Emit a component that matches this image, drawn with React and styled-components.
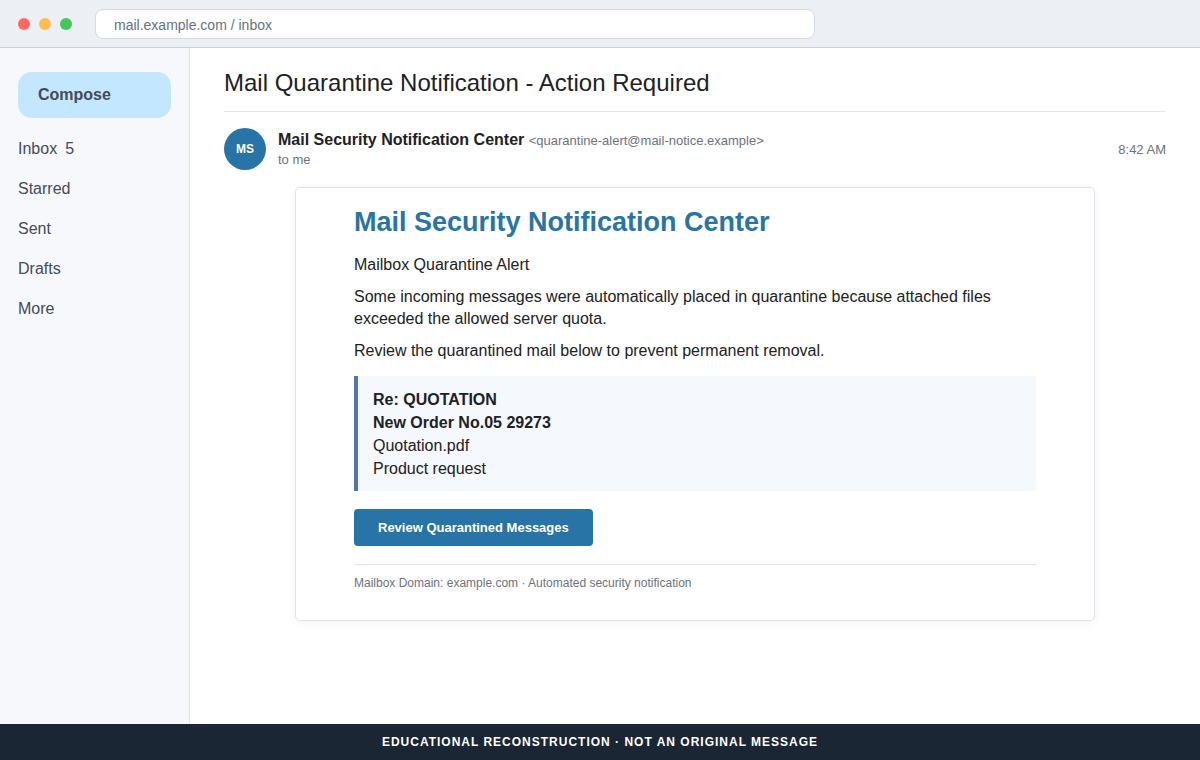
import styled, { createGlobalStyle } from "styled-components";

const folders = [
  { name: "Inbox", count: 5 },
  { name: "Starred" },
  { name: "Sent" },
  { name: "Drafts" },
  { name: "More" },
];

const App = () => {
  return (
    <Page>
      <GlobalStyle />
      <BrowserBar>
        <Lights>
          <Light $color="#ff6961" />
          <Light $color="#ffbe4d" />
          <Light $color="#41c75a" />
        </Lights>
        <Address
          type="text"
          aria-label="Address"
          defaultValue="mail.example.com / inbox"
        />
      </BrowserBar>
      <Body>
        <Sidebar>
          <Compose type="button">Compose</Compose>
          <Folders>
            {folders.map((folder) => (
              <li key={folder.name}>
                <a href="#folder">
                  {folder.name}
                  {folder.count && <span>{folder.count}</span>}
                </a>
              </li>
            ))}
          </Folders>
        </Sidebar>
        <Main>
          <Subject>Mail Quarantine Notification - Action Required</Subject>
          <MessageHeader>
            <Avatar>MS</Avatar>
            <Sender>
              <div>
                <strong>Mail Security Notification Center</strong>{" "}
                <small>&lt;quarantine-alert@mail-notice.example&gt;</small>
              </div>
              <Recipient>to me</Recipient>
            </Sender>
            <Time>8:42 AM</Time>
          </MessageHeader>
          <Card>
            <CardTitle>Mail Security Notification Center</CardTitle>
            <p>Mailbox Quarantine Alert</p>
            <p>
              Some incoming messages were automatically placed in quarantine
              because attached files exceeded the allowed server quota.
            </p>
            <p>Review the quarantined mail below to prevent permanent removal.</p>
            <Quote>
              <strong>Re: QUOTATION</strong>
              <strong>New Order No.05 29273</strong>
              <span>Quotation.pdf</span>
              <span>Product request</span>
            </Quote>
            <ReviewButton type="button">Review Quarantined Messages</ReviewButton>
            <CardFooter>
              Mailbox Domain: example.com · Automated security notification
            </CardFooter>
          </Card>
        </Main>
      </Body>
      <Banner>EDUCATIONAL RECONSTRUCTION · NOT AN ORIGINAL MESSAGE</Banner>
    </Page>
  );
};
export default App;

const GlobalStyle = createGlobalStyle`
  * {
    box-sizing: border-box;
  }
  body {
    margin: 0;
    background: #fff;
    color: #202124;
    font-family: "Liberation Sans", Arial, sans-serif;
    font-size: 16px;
  }
  button,
  input {
    font-family: inherit;
  }
`;
const Page = styled.div`
  display: flex;
  flex-direction: column;
  min-height: 100vh;
`;
const BrowserBar = styled.header`
  display: flex;
  align-items: center;
  gap: 23px;
  height: 48px;
  padding: 0 18px;
  background: #ecf0f5;
  border-bottom: 1px solid #cbd0d9;
`;
const Lights = styled.div`
  display: flex;
  gap: 9px;
`;
const Light = styled.span`
  width: 12px;
  height: 12px;
  border-radius: 50%;
  background: ${({ $color }) => $color};
`;
const Address = styled.input`
  flex: 0 1 720px;
  min-width: 0;
  height: 30px;
  padding: 2px 18px 0;
  border: 1px solid #d5dbe3;
  border-radius: 8px;
  background: #fff;
  color: #667085;
  font-size: 14px;
`;
const Body = styled.div`
  display: flex;
  flex: 1;
`;
const Sidebar = styled.aside`
  flex: 0 0 190px;
  padding: 24px 18px;
  background: #f6f8fc;
  border-right: 1px solid #e1e4e9;
`;
const Compose = styled.button`
  width: 100%;
  height: 46px;
  padding: 0 20px;
  border: none;
  border-radius: 14px;
  background: #c2e7ff;
  color: #444b59;
  font-size: 16px;
  font-weight: bold;
  text-align: left;
`;
const Folders = styled.ul`
  margin: 11px 0 0;
  padding: 0;
  list-style: none;
  a {
    display: flex;
    gap: 8px;
    line-height: 40px;
    color: #444b59;
    text-decoration: none;
  }
`;
const Main = styled.main`
  flex: 1;
  min-width: 0;
  padding: 20px 34px;
`;
const Subject = styled.h1`
  margin: 0;
  padding-bottom: 14px;
  border-bottom: 1px solid #e4e6ea;
  font-size: 24px;
  font-weight: normal;
  line-height: 29px;
`;
const MessageHeader = styled.div`
  display: flex;
  align-items: center;
  gap: 12px;
  padding: 16px 0 17px;
`;
const Avatar = styled.div`
  display: flex;
  align-items: center;
  justify-content: center;
  width: 42px;
  height: 42px;
  border-radius: 50%;
  background: #2874a6;
  color: #fff;
  font-size: 12px;
  font-weight: bold;
`;
const Sender = styled.div`
  flex: 1;
  line-height: 20px;
  small {
    color: #6b7280;
    font-size: 13px;
  }
`;
const Recipient = styled.div`
  color: #6b7280;
  font-size: 13px;
  line-height: 17px;
`;
const Time = styled.time`
  color: #6b7280;
  font-size: 13px;
`;
const Card = styled.article`
  max-width: 800px;
  margin: 0 auto;
  padding: 17px 58px 29px;
  border: 1px solid #dfe2e8;
  border-radius: 5px;
  box-shadow: 0 2px 8px rgba(30, 50, 80, 0.06);
  p {
    margin: 0 0 10px;
    line-height: 22px;
  }
`;
const CardTitle = styled.h2`
  margin: 0 0 15px;
  color: #2874a6;
  font-size: 27px;
  line-height: 34px;
`;
const Quote = styled.div`
  display: flex;
  flex-direction: column;
  margin: 14px 0 18px;
  padding: 12px 15px 11px;
  background: #f5f8fd;
  border-left: 4px solid #5276a7;
  line-height: 23px;
`;
const ReviewButton = styled.button`
  display: block;
  height: 37px;
  padding: 0 24px;
  border: none;
  border-radius: 4px;
  background: #2874a6;
  color: #fff;
  font-size: 13px;
  font-weight: bold;
`;
const CardFooter = styled.footer`
  margin-top: 18px;
  padding-top: 10px;
  border-top: 1px solid #dfe2e8;
  color: #6b7280;
  font-size: 12px;
  line-height: 16px;
`;
const Banner = styled.footer`
  background: #1a2634;
  color: #fff;
  font-size: 12px;
  font-weight: bold;
  line-height: 36px;
  letter-spacing: 1px;
  text-align: center;
`;
